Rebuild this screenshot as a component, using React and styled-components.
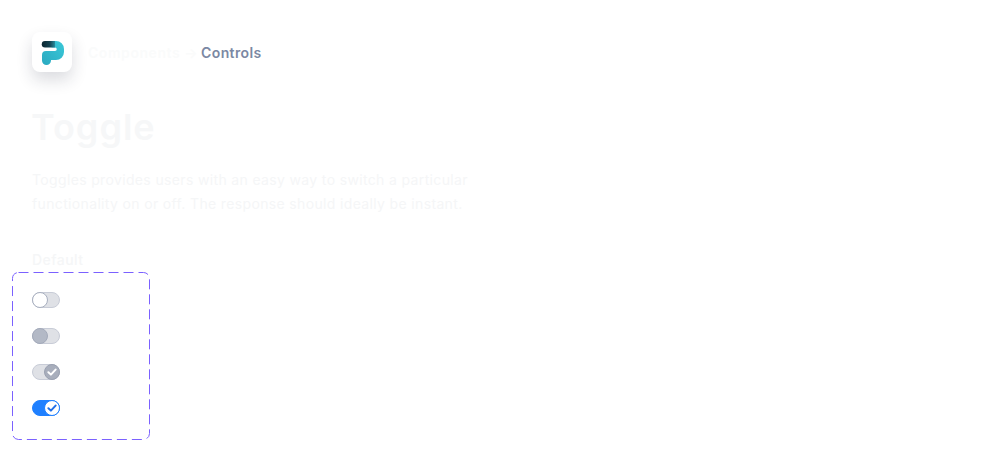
import React from 'react'
import styled, { createGlobalStyle } from 'styled-components'

const GlobalStyle = createGlobalStyle`
  html, body {
    margin: 0;
    padding: 0;
    background: #ffffff;
    font-family: Inter, "Open Sans", "Liberation Sans", sans-serif;
  }
`

const Page = styled.div`
  width: 992px;
  height: 468px;
  box-sizing: border-box;
  padding: 32px 32px 0;
  overflow: hidden;
`

const TopBar = styled.div`
  display: flex;
  align-items: center;
  gap: 16px;
  height: 40px;
`

const LogoTile = styled.div`
  width: 40px;
  height: 40px;
  border-radius: 8px;
  background: #ffffff;
  box-shadow: 0 8px 16px rgba(30, 40, 60, 0.16);
  display: flex;
  align-items: center;
  justify-content: center;
`

const Crumbs = styled.div`
  display: flex;
  align-items: center;
  font-size: 14px;
  line-height: 20px;
  font-weight: 600;
  margin-top: 2px;
`

const CrumbMuted = styled.span`
  color: #fafbfb;
  width: 113px;
  white-space: nowrap;
  letter-spacing: 0.55px;
`

const CrumbActive = styled.span`
  color: #7b88a3;
  letter-spacing: 0.4px;
`

const Title = styled.h1`
  margin: 30px 0 0 -1px;
  font-size: 36px;
  line-height: 50px;
  font-weight: 600;
  color: #f6f7f8;
  letter-spacing: 1px;
`

const Description = styled.p`
  margin: 16px 0 0;
  width: 470px;
  font-size: 14px;
  line-height: 24px;
  color: #f5f6f7;
  letter-spacing: 0.35px;
`

const SectionLabel = styled.div`
  margin-top: 32px;
  font-size: 14px;
  line-height: 24px;
  font-weight: 500;
  color: #f5f6f7;
  letter-spacing: 0.45px;
`

const ToggleFrame = styled.div`
  position: relative;
  width: 138px;
  height: 168px;
  margin: 0 0 0 -20px;
  box-sizing: border-box;
  padding: 20px 0 0 20px;
  display: flex;
  flex-direction: column;
  gap: 20px;
`

const DashedOutline = styled.svg`
  position: absolute;
  inset: 0;
  width: 100%;
  height: 100%;
  pointer-events: none;
`

const Track = styled.div`
  position: relative;
  width: 28px;
  height: 16px;
  box-sizing: border-box;
  border-radius: 8px;
  background: ${(p) => (p.$on ? '#1f80ff' : '#dfe1e6')};
  border: 1px solid ${(p) => (p.$on ? '#1f80ff' : '#c8ccd7')};
`

const Knob = styled.div`
  position: absolute;
  top: -1px;
  ${(p) => (p.$right ? 'right: -1px;' : 'left: -1px;')}
  width: 16px;
  height: 16px;
  box-sizing: border-box;
  border-radius: 50%;
  background: ${(p) => p.$fill};
  border: 1px solid ${(p) => p.$edge};
  display: flex;
  align-items: center;
  justify-content: center;
`

const Check = ({ color }) => (
  <svg width="10" height="10" viewBox="0 0 10 10" fill="none">
    <path d="M1.4 5.2 L3.9 7.6 L8.6 2.6" stroke={color} strokeWidth="2" strokeLinecap="round" strokeLinejoin="round" />
  </svg>
)

const Logo = () => (
  <svg width="24" height="26" viewBox="0 0 24 26">
    <defs>
      <linearGradient id="stem" x1="0" y1="1" x2="1" y2="0">
        <stop offset="0" stopColor="#2aa9c0" />
        <stop offset="1" stopColor="#3ac8d8" />
      </linearGradient>
      <linearGradient id="bar" x1="0" y1="0" x2="1" y2="0">
        <stop offset="0" stopColor="#0b2530" />
        <stop offset="0.6" stopColor="#13414f" />
        <stop offset="1" stopColor="#27899b" />
      </linearGradient>
    </defs>
    <path d="M13 2 H16 A8 8 0 0 1 24 10 V13 A8 8 0 0 1 16 21 H11 V21.5 A4.5 4.5 0 0 1 2 21.5 V16 A4 4 0 0 1 6 12 H15 A1.75 1.75 0 0 0 15 8.5 H13 A3.25 3.25 0 0 1 13 2 Z" fill="url(#stem)" />
    <path d="M5 2 H15 V8.5 H5 A3.25 3.25 0 0 1 5 2 Z" fill="url(#bar)" />
  </svg>
)

function App() {
  return (
    <Page>
      <GlobalStyle />
      <TopBar>
        <LogoTile>
          <Logo />
        </LogoTile>
        <Crumbs>
          <CrumbMuted>Components →</CrumbMuted>
          <CrumbActive>Controls</CrumbActive>
        </Crumbs>
      </TopBar>
      <Title>Toggle</Title>
      <Description>
        Toggles provides users with an easy way to switch a particular functionality on or off. The response should ideally be instant.
      </Description>
      <SectionLabel>Default</SectionLabel>
      <ToggleFrame>
        <DashedOutline>
          <rect x="0.5" y="0.5" width="137" height="167" rx="6" fill="none" stroke="#7b61ff" strokeDasharray="10 5" />
        </DashedOutline>
        <Track>
          <Knob $fill="#ffffff" $edge="#a8afbf" />
        </Track>
        <Track>
          <Knob $fill="#b3b9c6" $edge="#a3aaba" />
        </Track>
        <Track>
          <Knob $right $fill="#a8aebc" $edge="#9aa1b1">
            <Check color="#ffffff" />
          </Knob>
        </Track>
        <Track $on>
          <Knob $right $fill="#ffffff" $edge="#1f80ff">
            <Check color="#1f6fe8" />
          </Knob>
        </Track>
      </ToggleFrame>
    </Page>
  )
}

export default App
